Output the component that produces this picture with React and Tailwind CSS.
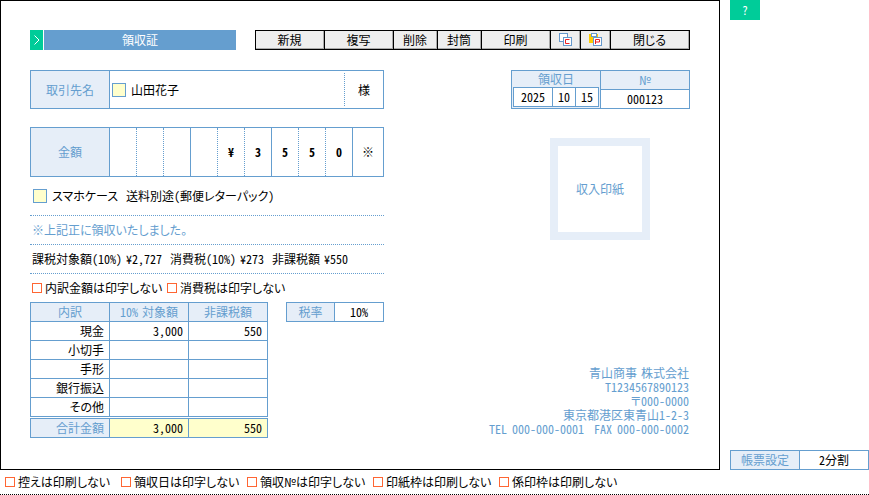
const FONT = "font-['Noto_Sans_CJK_JP','Noto_Sans',sans-serif] [font-feature-settings:'palt','hwid']";

const amountCells = [
  { text: '', line: 'border-dotted' },
  { text: '', line: 'border-dotted' },
  { text: '', line: 'border-solid' },
  { text: '', line: 'border-dotted' },
  { text: '¥', line: 'border-dotted' },
  { text: '3', line: 'border-solid' },
  { text: '5', line: 'border-dotted' },
  { text: '5', line: 'border-dotted' },
  { text: '0', line: 'border-solid' },
];

const rows = [
  { label: '現金', taxed: '3,000', free: '550' },
  { label: '小切手', taxed: '', free: '' },
  { label: '手形', taxed: '', free: '' },
  { label: '銀行振込', taxed: '', free: '' },
  { label: 'その他', taxed: '', free: '' },
];

const buttons = [
  { label: '新規', w: 'w-[69px]' },
  { label: '複写', w: 'w-[69px]' },
  { label: '削除', w: 'w-[44px]' },
  { label: '封筒', w: 'w-[44px]' },
  { label: '印刷', w: 'w-[69px]' },
  { icon: 'c', w: 'w-[30px]' },
  { icon: 'p', w: 'w-[30px]' },
  { label: '閉じる', w: 'w-[78px]' },
];

const cellBase = 'flex items-center border-r border-b border-[#659ecf]';

function Check({ label, className }) {
  return (
    <span className={`flex shrink-0 items-center gap-[3px] whitespace-nowrap ${className}`}>
      <span className="h-[10px] w-[10px] shrink-0 bg-[#ff6633] p-[1px]">
        <span className="block h-[8px] w-[8px] bg-white" />
      </span>
      <span>{label}</span>
    </span>
  );
}

function CopyIcon() {
  return (
    <svg width="13" height="13" viewBox="0 0 13 13">
      <rect x="0.5" y="0.5" width="8" height="8" fill="#fff" stroke="#6699cc" />
      <rect x="4.5" y="4.5" width="8" height="8" fill="#fff" stroke="#6699cc" />
      <path d="M10.5 6.5H6.5V10.5H10.5" fill="none" stroke="#ee2222" />
    </svg>
  );
}

function PasteIcon() {
  return (
    <svg width="13" height="13" viewBox="0 0 13 13">
      <rect x="0" y="1" width="9" height="9" fill="#ffcc00" />
      <rect x="2.5" y="0.5" width="5" height="3" fill="#fff" stroke="#6699cc" />
      <rect x="4.5" y="4.5" width="8" height="8" fill="#fff" stroke="#6699cc" />
      <path d="M6.5 11V6.5H10.5V9H6.5" fill="none" stroke="#ee2222" />
    </svg>
  );
}

export default function App() {
  return (
    <div className={`flex h-[495px] w-[869px] flex-col overflow-hidden bg-white text-[12px] leading-none text-black ${FONT}`}>
      <div className="flex h-[470px]">
        {/* Form sheet */}
        <div className="h-[470px] w-[720px] border border-black pt-[29px] pr-[29px] pl-[29px]">
          {/* Title + toolbar */}
          <div className="flex h-[20px] justify-between">
            <div className="flex w-[206px] gap-[1px]">
              <div className="flex w-[13px] items-center justify-center bg-[#00cc99]">
                <svg width="6" height="10" viewBox="0 0 6 10">
                  <path d="M0.5 0.5L5 5L0.5 9.5" fill="none" stroke="#fff" />
                </svg>
              </div>
              <div className="flex flex-1 items-center justify-center bg-[#659ecf] text-white">領収証</div>
            </div>
            <div className="flex h-[20px] border border-black">
              {buttons.map((b, i) => (
                <div key={i} className={`flex ${b.w} ${i < buttons.length - 1 ? 'border-r border-black' : ''}`}>
                  <div className="flex flex-1 items-center justify-center border-r border-b border-[#aaaaaa] bg-[#eeeeee]">
                    {b.icon === 'c' && <CopyIcon />}
                    {b.icon === 'p' && <PasteIcon />}
                    {b.label}
                  </div>
                </div>
              ))}
            </div>
          </div>

          <div className="flex justify-between">
            {/* Left column */}
            <div className="w-[354px]">
              <div className="mt-[20px] flex h-[39px] border border-[#659ecf]">
                <div className="flex w-[79px] items-center justify-center border-r border-[#659ecf] bg-[#e6eef8] text-[#659ecf]">取引先名</div>
                <div className="flex flex-1 items-center gap-[5px] pl-[2px]">
                  <span className="h-[14px] w-[14px] border border-[#659ecf] bg-[#ffffcc]" />
                  <span>山田花子</span>
                </div>
                <div className="my-[2px] flex w-[39px] items-center justify-center border-l border-dotted border-[#659ecf]">様</div>
              </div>

              <div className="mt-[18px] flex h-[50px] border border-[#659ecf]">
                <div className="flex w-[79px] items-center justify-center border-r border-[#659ecf] bg-[#e6eef8] text-[#659ecf]">金額</div>
                {amountCells.map((cell, i) => (
                  <div key={i} className={`flex w-[27px] items-center justify-center border-r border-[#659ecf] font-bold ${cell.line}`}>
                    {cell.text}
                  </div>
                ))}
                <div className="flex flex-1 items-center justify-center">※</div>
              </div>

              <div className="mt-[12px] flex h-[14px] items-center gap-[5px] pl-[3px]">
                <span className="h-[14px] w-[14px] border border-[#659ecf] bg-[#ffffcc]" />
                <span className="[word-spacing:-2px]">スマホケース&nbsp;&nbsp;送料別途(郵便レターパック)</span>
              </div>

              <div className="mt-[12px] flex h-[29px] items-center border-t border-dotted border-[#659ecf] pl-[2px] text-[#659ecf]">※上記正に領収いたしました。</div>
              <div className="flex h-[29px] items-center border-t border-dotted border-[#659ecf] pl-[2px] [word-spacing:-2px]">課税対象額(10%) ¥2,727&nbsp;&nbsp;消費税(10%) ¥273&nbsp;&nbsp;非課税額 ¥550</div>
              <div className="flex h-[29px] items-center border-t border-dotted border-[#659ecf] pl-[2px]">
                <Check label="内訳金額は印字しない" className="w-[135px]" />
                <Check label="消費税は印字しない" className="w-[120px]" />
              </div>

              <div className="flex items-start gap-[18px]">
                {/* Breakdown table */}
                <div className="w-[238px]">
                  <div className="grid grid-cols-[79px_79px_79px] border-t border-l border-[#659ecf]">
                    <div className={`${cellBase} h-[19px] justify-center bg-[#e6eef8] text-[#659ecf]`}>内訳</div>
                    <div className={`${cellBase} h-[19px] justify-center bg-[#e6eef8] text-[#659ecf] [word-spacing:-2px]`}>10% 対象額</div>
                    <div className={`${cellBase} h-[19px] justify-center bg-[#e6eef8] text-[#659ecf]`}>非課税額</div>
                    {rows.map((row) => (
                      <div key={row.label} className="contents">
                        <div className={`${cellBase} h-[19px] justify-end pr-[5px]`}>{row.label}</div>
                        <div className={`${cellBase} h-[19px] justify-end pr-[5px]`}>{row.taxed}</div>
                        <div className={`${cellBase} h-[19px] justify-end pr-[5px]`}>{row.free}</div>
                      </div>
                    ))}
                  </div>
                  <div className="mt-[1px] grid grid-cols-[79px_79px_79px] border-t border-l border-[#659ecf]">
                    <div className={`${cellBase} h-[19px] justify-end bg-[#e6eef8] pr-[5px] text-[#659ecf]`}>合計金額</div>
                    <div className={`${cellBase} h-[19px] justify-end bg-[#ffffcc] pr-[5px]`}>3,000</div>
                    <div className={`${cellBase} h-[19px] justify-end bg-[#ffffcc] pr-[5px]`}>550</div>
                  </div>
                </div>
                {/* Tax rate */}
                <div className="flex h-[20px] w-[98px] border border-[#659ecf]">
                  <div className="flex w-[48px] items-center justify-center border-r border-[#659ecf] bg-[#e6eef8] text-[#659ecf]">税率</div>
                  <div className="flex flex-1 items-center justify-center">10%</div>
                </div>
              </div>
            </div>

            {/* Right column */}
            <div className="flex w-[179px] flex-col items-end">
              <div className="mt-[20px] flex h-[39px] w-[179px] border border-[#659ecf]">
                <div className="flex w-[89px] flex-col border-r border-[#659ecf] bg-[#e6eef8]">
                  <div className="flex h-[16px] items-center justify-center text-[#659ecf]">領収日</div>
                  <div className="mx-[1px] flex h-[20px] border border-[#659ecf] bg-white">
                    <div className="flex w-[39px] items-center justify-center border-r border-[#659ecf]">2025</div>
                    <div className="flex w-[23px] items-center justify-center border-r border-[#659ecf]">10</div>
                    <div className="flex flex-1 items-center justify-center">15</div>
                  </div>
                </div>
                <div className="flex flex-1 flex-col">
                  <div className="flex h-[19px] items-center justify-center border-b border-[#659ecf] bg-[#e6eef8] text-[#659ecf]">№</div>
                  <div className="flex flex-1 items-center justify-center">000123</div>
                </div>
              </div>

              <div className="mt-[29px] mr-[40px] flex h-[102px] w-[100px] items-center justify-center border-[8px] border-[#e6eef8] text-[#659ecf]">収入印紙</div>

              <div className="mt-[126px] flex flex-col items-end pr-[1px] text-right leading-[14px] text-[#659ecf]">
                <div className="[word-spacing:-2px]">青山商事 株式会社</div>
                <div>T1234567890123</div>
                <div>〒000-0000</div>
                <div>東京都港区東青山1-2-3</div>
                <div className="whitespace-nowrap [word-spacing:-1px]">TEL 000-000-0001&nbsp;&nbsp;FAX 000-000-0002</div>
              </div>
            </div>
          </div>
        </div>

        {/* Side panel */}
        <div className="ml-[10px] flex flex-1 flex-col justify-between">
          <div className="flex h-[20px] w-[30px] items-center justify-center bg-[#00cc99] text-white">?</div>
          <div className="flex h-[20px] w-[139px] border border-[#659ecf]">
            <div className="flex w-[69px] items-center justify-center border-r border-[#659ecf] bg-[#e6eef8] text-[#659ecf]">帳票設定</div>
            <div className="flex flex-1 items-center justify-center">2分割</div>
          </div>
        </div>
      </div>

      {/* Bottom options */}
      <div className="flex h-[25px] items-center border-b border-dotted border-black pl-[5px]">
        <Check label="控えは印刷しない" className="w-[116px]" />
        <Check label="領収日は印字しない" className="w-[126px]" />
        <Check label="領収№は印字しない" className="w-[126px]" />
        <Check label="印紙枠は印刷しない" className="w-[126px]" />
        <Check label="係印枠は印刷しない" className="w-[126px]" />
      </div>
    </div>
  );
}
